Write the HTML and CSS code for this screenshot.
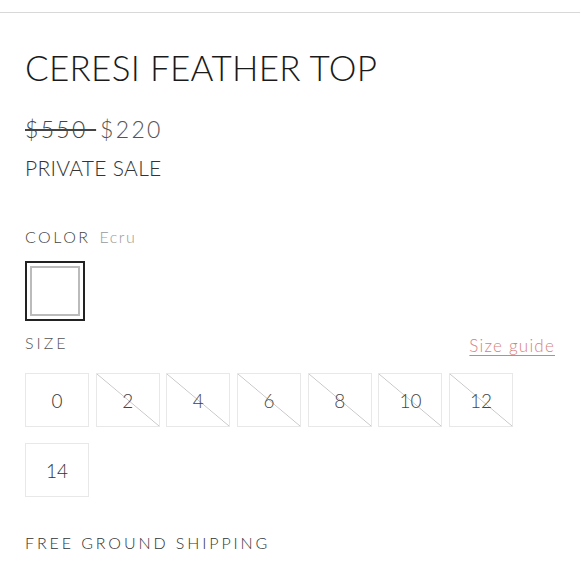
FILE: index.html
```html
<!DOCTYPE html>
<html>
<head>
<meta charset="utf-8">
<link rel="stylesheet" href="styles.css">
</head>
<body>
<div class="topbar"></div>
<main class="product">
  <h1 class="title">CERESI FEATHER TOP</h1>
  <div class="price"><span class="old">$550 </span><span class="new">$220</span></div>
  <div class="sale">PRIVATE SALE</div>
  <div class="color-label">COLOR <span class="color-name">Ecru</span></div>
  <div class="swatch"><div class="swatch-inner"></div></div>
  <div class="size-head">
    <span class="size-label">SIZE</span>
    <a class="size-guide" href="#">Size guide</a>
  </div>
  <div class="sizes">
    <div class="size">0</div>
    <div class="size na">2</div>
    <div class="size na">4</div>
    <div class="size na">6</div>
    <div class="size na">8</div>
    <div class="size na">10</div>
    <div class="size na">12</div>
    <div class="size">14</div>
  </div>
  <div class="shipping">FREE GROUND SHIPPING</div>
</main>
</body>
</html>
```
FILE: styles.css
```css
html, body {
  margin: 0;
  padding: 0;
  background: #fff;
}
body {
  font-family: "Lato", "Liberation Sans", sans-serif;
  font-weight: 300;
  color: #222;
}
.topbar {
  height: 12px;
  border-bottom: 1px solid #d8d8d8;
}
.product {
  padding: 0 25px;
}
.title {
  margin: 32px 0 0;
  font-size: 35px;
  font-weight: 300;
  letter-spacing: 0.3px;
  line-height: 44px;
  color: #1a1a1a;
}
.price {
  margin-top: 26px;
  font-size: 23px;
  line-height: 28px;
  letter-spacing: 2.3px;
  color: #555;
}
.old {
  color: #444;
  text-decoration: line-through;
  text-decoration-thickness: 1.5px;
}
.new {
  margin-left: 4px;
}
.sale {
  margin-top: 11px;
  font-size: 21px;
  line-height: 28px;
  letter-spacing: 0.3px;
  color: #333;
}
.color-label {
  margin-top: 45px;
  font-size: 16px;
  line-height: 20px;
  letter-spacing: 2.5px;
  color: #444;
}
.color-name {
  color: #999;
  letter-spacing: 1.5px;
  margin-left: 2px;
}
.swatch {
  margin-top: 14px;
  border: 2px solid #222;
  padding: 3px;
  box-sizing: content-box;
  width: 50px;
  height: 50px;
}
.swatch-inner {
  width: 100%;
  height: 100%;
  box-sizing: border-box;
  border: 2px solid #bbb;
}
.size-head {
  margin-top: 11px;
  display: flex;
  justify-content: space-between;
  align-items: baseline;
}
.size-label {
  font-size: 16px;
  line-height: 20px;
  letter-spacing: 3px;
  color: #555;
}
.size-guide {
  font-size: 17px;
  letter-spacing: 1.2px;
  color: #d9807f;
  text-decoration: underline;
  text-underline-offset: 3px;
  position: relative;
  top: 3px;
}
.sizes {
  margin-top: 20px;
  display: flex;
  flex-wrap: wrap;
  column-gap: 6.7px;
  row-gap: 16px;
}
.size {
  width: 64px;
  height: 54px;
  box-sizing: border-box;
  border: 1.5px solid #e8e8e8;
  display: flex;
  align-items: center;
  justify-content: center;
  font-size: 19px;
  color: #333;
}
.size.na {
  background: linear-gradient(to top right, transparent calc(50% - 0.7px), #c6c6c6 50%, transparent calc(50% + 0.7px));
  color: #444;
}
.shipping {
  margin-top: 36px;
  font-size: 16px;
  line-height: 20px;
  letter-spacing: 2.9px;
  color: #333;
}
```
